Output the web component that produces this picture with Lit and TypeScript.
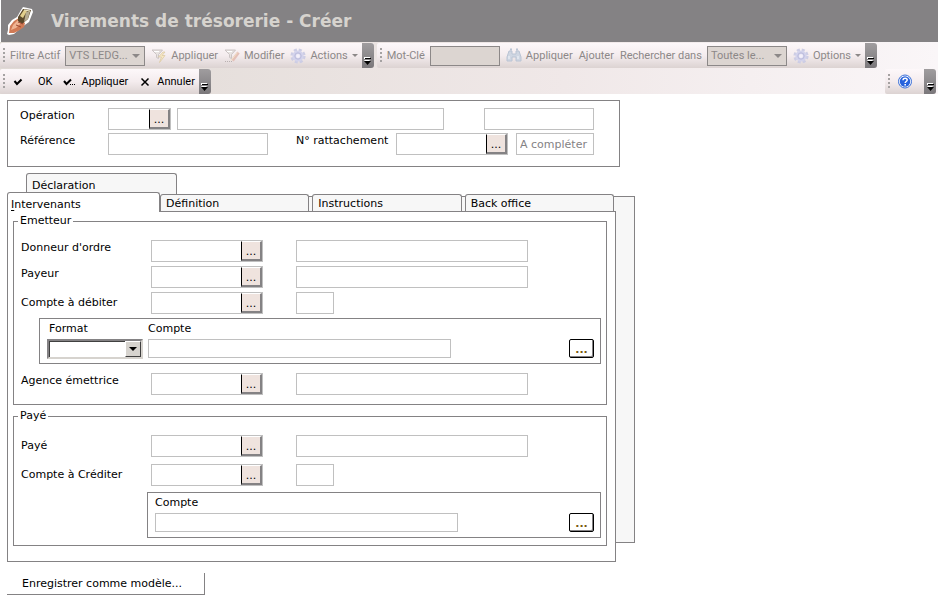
import { LitElement, html, css, svg, nothing } from "lit";
import { customElement, property } from "lit/decorators.js";

const gear = svg`
  <circle cx="8" cy="8" r="6.300" fill="none" stroke="#cdcde4" stroke-width="2.600" stroke-dasharray="3 1.950"/>
  <circle cx="8" cy="8" r="5.600" fill="#d3d3ec"/>
  <circle cx="8" cy="8" r="3.200" fill="none" stroke="#bcbcdc"/>
  <circle cx="8" cy="8" r="2" fill="#f4f0fa"/>`;

const funnel = svg`
  <path d="M1 2h10.500l-4 4.500v4l-2-1v-3z" fill="#e8e3e1" stroke="#cbc4c4"/>
  <path d="M3 3.500h5" stroke="#fff"/>`;

const icons: Record<string, unknown> = {
  gear,
  apply: svg`${funnel}<path d="M12 4l-4.500 5h3l-2 5.500 5.500-7h-3l3-3.500z" fill="#f8e9c4" stroke="#dccaa6" stroke-width=".8"/>`,
  edit: svg`${funnel}<path d="M14.500 4.500l-6 8" stroke="#e4c0b8" stroke-width="3"/><path d="M13.500 4.500l-6.500 8" stroke="#f5e2c4"/><path d="M1 13.500h8" stroke="#b8b0b0" stroke-dasharray="1 1"/>`,
  search: svg`
    <path d="M3 3h3v3h4v-3h3l2 6v4h-5v-4h-4v4h-5v-4z" fill="#cfd6e2" stroke="#bac4d4"/>
    <path d="M4 1.500h2M10 1.500h2" stroke="#bac4d4" stroke-width="2"/>
    <path d="M3 8v3M12 8v3" stroke="#f2f5fa"/>`,
  check: svg`<path d="M4.500 7l2.500 3 4.500-4.500" fill="none" stroke="#000" stroke-width="2"/>`,
  checkMore: svg`<path d="M3 7l2.500 3 4.500-4.500" fill="none" stroke="#000" stroke-width="2"/><path d="M9 10.500h1M11 10.500h1M13 10.500h1" stroke="#000"/>`,
  cross: svg`<path d="M4.500 4.500l7 7M11.500 4.500l-7 7" stroke="#000" stroke-width="1.500"/>`,
  help: svg`
    <circle cx="8" cy="7.500" r="6.500" fill="#fff" stroke="#3a6fd8"/>
    <circle cx="8" cy="7.500" r="5.200" fill="#2762dc"/>
    <path d="M6 6.200c0-2.800 4.200-2.500 4.200-.2 0 1.500-2 1.500-2 3" fill="none" stroke="#fff" stroke-width="1.500"/>
    <path d="M7.400 10h1.600v1.400h-1.600z" fill="#fff"/>`,
};

const icon = (name: string) => html`<svg class="icon" viewBox="0 0 16 16" aria-hidden="true">${icons[name]}</svg>`;

@customElement("entry-field")
export class EntryField extends LitElement {
  @property() label = "";
  @property() value = "";
  @property({ type: Boolean }) lookup = false;

  static styles = css`
    :host { display: flex; height: 22px; box-sizing: border-box; border: 1px solid #c0c0c0; background: #fff; min-width: 0; }
    :host([low]) { height: 19px; }
    input { flex: 1; min-width: 0; width: 0; border: 0; margin: 0; padding: 0 3px; outline: 0; background: none; color: #848284; font: 11px "DejaVu Sans", sans-serif; }
    button { flex: none; width: 21px; padding: 3px 0 0; border-style: solid; border-width: 1px 2px 2px 1px; border-color: #fff #848284 #848284 #000; background: #efe3de; color: #000; font: 11px/14px "DejaVu Sans", sans-serif; text-align: center; }
  `;

  render() {
    return html`<input aria-label=${this.label} .value=${this.value}>
      ${this.lookup ? html`<button type="button" aria-label="${this.label}, rechercher">...</button>` : nothing}`;
  }
}

@customElement("app-root")
export class AppRoot extends LitElement {
  static styles = css`
    :host { display: block; min-height: 100vh; background: #fff; color: #000; font: 11px/14px "DejaVu Sans", sans-serif; }
    * { box-sizing: border-box; }
    button { font: inherit; color: inherit; margin: 0; padding: 0; border: 0; background: none; white-space: nowrap; }
    .icon { width: 16px; height: 16px; flex: none; display: block; }

    header { display: flex; align-items: center; gap: 16px; height: 42px; padding-left: 6px; border-left: 1px solid #fff; background: #848284; }
    .logo { width: 28px; height: 30px; }
    h1 { margin: 0; font: bold 17px/22px "DejaVu Sans", sans-serif; color: #d6d3ce; white-space: nowrap; }

    .bars { padding-top: 1px; display: flex; flex-direction: column; gap: 1px; font: 11px/14px Roboto, sans-serif; background: linear-gradient(90deg, #e0dad5, #f0e8e8 60%, #faf6f8); }
    .line { display: flex; gap: 3px; padding-right: 2px; }
    .bar { display: flex; align-items: center; height: 25px; padding-left: 3px; border-radius: 2px; background: linear-gradient(#fdf8fa, #f4ecee 50%, #dcd3d2); }
    .off { color: #8c8888; }
    .right { margin-left: auto; }
    .grip { width: 2px; height: 15px; margin-right: 5px; background: repeating-linear-gradient(#a5a2a2 0 2px, transparent 2px 4px); }
    .tools { display: flex; align-items: center; gap: 6px; padding-right: 4px; }
    .spaced { gap: 9px; }
    .aid { padding: 0 11px 0 2px; }
    .tool { display: flex; align-items: center; gap: 4px; }
    .wide { gap: 12px; }
    .fit { gap: 5px; }
    .down { border: 3px solid transparent; border-top-color: currentColor; border-bottom: 0; }
    .more { width: 12px; height: 25px; display: flex; align-items: flex-end; justify-content: center; padding-bottom: 3px; border-radius: 0 3px 3px 0; background: linear-gradient(#a09d9f, #7a777a); }
    .more svg { width: 7px; height: 8px; }
    .pick { display: grid; align-items: center; width: 80px; height: 20px; border: 1px solid #8c8888; background: #dcd5d1; }
    .pick select { grid-area: 1 / 1; appearance: none; width: 100%; height: 18px; padding: 0 3px; border: 0; outline: 0; background: none; color: inherit; font: inherit; opacity: 1; }
    .pick .down { grid-area: 1 / 1; justify-self: end; margin-right: 4px; border-width: 4px 4px 0; pointer-events: none; }
    .key { width: 70px; height: 20px; border: 1px solid #8c8888; background: #dcd5d1; }

    main { padding: 6px 7px 2px; }
    .row { display: flex; align-items: flex-start; }
    .row label { padding-top: 1px; }
    .head { max-width: 613px; padding: 7px 12px 11px; border: 1px solid #848284; display: flex; flex-direction: column; gap: 3px; }
    .grow { flex: 0 1 267px; margin-left: 6px; }
    .amount { flex: 0 1 110px; margin-left: 40px; }
    .caption { flex: none; width: 88px; }
    .link { flex: none; width: 100px; margin-left: 28px; }
    .small { flex: 0 1 63px; }
    .ref { flex: 0 1 160px; }
    .code { flex: 0 1 112px; }
    .todo { flex: 0 1 78px; margin-left: 8px; }

    .book { display: grid; grid-template: 19px 19px auto / minmax(0, 609px) 19px; margin-top: 6px; }
    .back { grid-area: 2 / 1 / 4 / 3; margin: 4px 0 19px 20px; border: 1px solid #848284; background: #f7f7f7; }
    .tab { border: 1px solid #848284; border-bottom: 0; border-radius: 3px 3px 0 0; background: #f7f7f7; text-align: left; padding: 2px 5px 0; height: 17px; flex: 0 1 150px; min-width: 0; }
    .rear { grid-area: 1 / 1; width: 151px; height: 21px; margin-left: 19px; padding-top: 3px; }
    .tabs { grid-area: 2 / 1; display: flex; align-items: flex-end; gap: 3px; z-index: 1; height: 19px; padding-right: 2px; }
    .current { flex: none; width: 153px; height: 20px; margin: 0 -3px -1px 0; padding: 4px 3px 0; background: #fff; align-self: flex-start; }
    .panel { grid-area: 3 / 1; border: 1px solid #848284; background: #fff; padding: 2px 8px 15px 5px; display: flex; flex-direction: column; gap: 4px; }

    fieldset { margin: 0; min-width: 0; border: 1px solid #848284; padding: 12px 5px 9px 7px; }
    .payee { padding-bottom: 7px; }
    legend { margin-left: -3px; padding: 0 2px; }
    .stack { display: flex; flex-direction: column; gap: 4px; }
    .loose { gap: 7px; }
    .name { flex: none; width: 130px; }
    .row.low label { padding-top: 4px; }
    .text { flex: 0 1 232px; margin-left: 33px; }
    .tiny { flex: 0 1 38px; margin-left: 33px; }
    .last { margin-top: 9px; }
    .inset { border: 1px solid #848284; height: 46px; margin: 4px 0 0 18px; padding: 3px 6px 0 7px; display: grid; grid-template: 17px 20px / 101px minmax(0, 303px) 1fr; }
    .single { margin: 6px 0 0 126px; grid-template-columns: minmax(0, 303px) 1fr; }
    .inset label:first-child { padding-left: 2px; }
    .single label:first-child { padding-left: 0; }
    .inset .dots { grid-row: 2; justify-self: end; }
    .inset entry-field { grid-row: 2; }
    .dots { width: 25px; height: 19px; padding-top: 3px; border: 1px solid #000; border-radius: 2px; box-shadow: inset -1px -1px #848284; color: #7a5a10; font-weight: bold; line-height: 14px; }
    .combo { grid-row: 2; display: grid; align-items: center; width: 96px; height: 20px; border: 2px solid; border-color: #848284 #d6d3ce #d6d3ce #848284; box-shadow: inset 1px 1px #404040; }
    .combo select { grid-area: 1 / 1; appearance: none; width: 100%; height: 16px; border: 0; outline: 0; background: none; font: inherit; }
    .arrow { grid-area: 1 / 1; justify-self: end; display: grid; place-items: center; width: 16px; height: 16px; border: 1px solid; border-color: #fff #404040 #404040 #fff; background: #d6d3ce; pointer-events: none; }
    .arrow .down { border-width: 4px 4px 0; }
    .save { margin-top: 11px; width: 198px; height: 22px; border: solid #848284; border-width: 0 1px 1px 0; text-align: left; padding-left: 15px; }
    u { text-underline-offset: 2px; }
  `;

  private more() {
    return html`<button class="more" type="button" aria-label="Autres boutons">
      <svg viewBox="0 0 7 8" aria-hidden="true"><path d="M0 0h6v2h-6z" fill="#fff"/><path d="M1 1h6v1h-6z"/><path d="M0 3h6l-3 4z" fill="#fff"/><path d="M0 4h7l-3.500 4z"/></svg>
    </button>`;
  }

  private tool(text: string, name = "", menu = false, cls = "") {
    return html`<button class="tool ${cls}" type="button">${name ? icon(name) : nothing}${text}${menu ? html`<span class="down"></span>` : nothing}</button>`;
  }

  private pick(id: string, text: string) {
    return html`<span class="pick"><select id=${id} aria-label=${id}><option>${text}</option></select><span class="down"></span></span>`;
  }

  private line(text: string, second: string, cls = "") {
    return html`<div class="row ${cls}">
      <label class="name">${text}</label>
      <entry-field class="code" lookup label=${text}></entry-field>
      <entry-field class=${second} label="${text}, libellé"></entry-field>
    </div>`;
  }

  render() {
    return html`
      <header>
        <svg class="logo" viewBox="0 0 28 30" aria-hidden="true">
          <path d="M0 28l1-4 0-5 4-5 5-3 4-7 2-3 9 2 1 3-4 10-7 5-8 7-5 1z" fill="#fff"/>
          <path d="M2 27l1-7 4-5 5-3 6 5-1 4-6 4-4 2z" fill="#d07a55"/>
          <path d="M4 24l2-5 5-5 3 3-5 5z" fill="#efb493"/>
          <path d="M11 11l5-8 8 1-3 9-6 5-4-3z" fill="#5c4a2c"/>
          <path d="M13 10l4-6 3 1-4 7z" fill="#e2cf8c"/>
          <path d="M19 6l4-1-2 8-4 3z" fill="#b5ab90"/>
          <path d="M17 4l6 1" stroke="#f4eecb"/>
          <path d="M9 19l5 2M11 16l5 2" stroke="#9c4a34"/>
        </svg>
        <h1>Virements de trésorerie - Créer</h1>
      </header>
      <div class="bars">
        <div class="line off">
          <div class="bar">
            <span class="grip"></span>
            <div class="tools">
              <label class="tool fit">Filtre Actif ${this.pick("filtre", "VTS LEDG...")}</label>
              ${this.tool("Appliquer", "apply")}${this.tool("Modifier", "edit")}${this.tool("Actions", "gear", true)}
            </div>
            ${this.more()}
          </div>
          <div class="bar">
            <span class="grip"></span>
            <div class="tools">
              <label class="tool fit">Mot-Clé <input class="key"></label>
              ${this.tool("Appliquer", "search")}${this.tool("Ajouter")}
              <label class="tool fit">Rechercher dans ${this.pick("portee", "Toutes le...")}</label>
              ${this.tool("Options", "gear", true)}
            </div>
            ${this.more()}
          </div>
        </div>
        <div class="line">
          <div class="bar">
            <span class="grip"></span>
            <div class="tools spaced">
              ${this.tool("OK", "check", false, "wide")}${this.tool("Appliquer", "checkMore")}${this.tool("Annuler", "cross")}
            </div>
            ${this.more()}
          </div>
          <div class="bar right">
            <span class="grip"></span>
            <div class="tools aid"><button type="button" aria-label="Aide">${icon("help")}</button></div>
            ${this.more()}
          </div>
        </div>
      </div>
      <main>
        <section class="head">
          <div class="row">
            <label class="caption">Opération</label>
            <entry-field class="small" lookup label="Opération"></entry-field>
            <entry-field class="grow" label="Opération, libellé"></entry-field>
            <entry-field class="amount" label="Opération, numéro"></entry-field>
          </div>
          <div class="row">
            <label class="caption">Référence</label>
            <entry-field class="ref" label="Référence"></entry-field>
            <label class="link">N° rattachement</label>
            <entry-field class="code" lookup label="N° rattachement"></entry-field>
            <entry-field class="todo" label="Statut" value="A compléter"></entry-field>
          </div>
        </section>
        <div class="book">
          <div class="back"></div>
          <button class="tab rear" type="button">Déclaration</button>
          <div class="tabs">
            <button class="tab current" type="button"><u>I</u>ntervenants</button>
            <button class="tab" type="button">Définition</button>
            <button class="tab" type="button">Instructions</button>
            <button class="tab" type="button">Back office</button>
          </div>
          <div class="panel">
            <fieldset>
              <legend>Emetteur</legend>
              <div class="stack">
                ${this.line("Donneur d'ordre", "text")}
                ${this.line("Payeur", "text")}
                ${this.line("Compte à débiter", "tiny", "low")}
              </div>
              <div class="inset">
                <label for="format">Format</label>
                <label>Compte</label>
                <span class="combo"><select id="format"><option></option></select><span class="arrow"><span class="down"></span></span></span>
                <entry-field low label="Compte"></entry-field>
                <button class="dots" type="button" aria-label="Compte, détail">...</button>
              </div>
              ${this.line("Agence émettrice", "text", "last")}
            </fieldset>
            <fieldset class="payee">
              <legend>Payé</legend>
              <div class="stack loose">
                ${this.line("Payé", "text", "low")}
                ${this.line("Compte à Créditer", "tiny", "low")}
              </div>
              <div class="inset single">
                <label>Compte</label>
                <entry-field low label="Compte"></entry-field>
                <button class="dots" type="button" aria-label="Compte, détail">...</button>
              </div>
            </fieldset>
          </div>
        </div>
        <button class="save" type="button">Enregistrer comme modèle...</button>
      </main>
    `;
  }
}
